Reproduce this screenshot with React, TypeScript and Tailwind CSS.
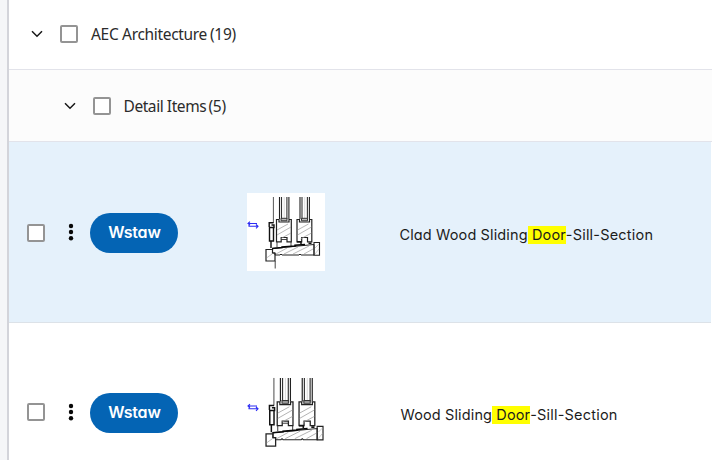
import React from "react";

function Chevron() {
  return (
    <svg width="12" height="8" viewBox="0 0 12 8" fill="none" stroke="#171717" strokeWidth="1.5">
      <path d="M1 1.2 6 6.2 11 1.2" />
    </svg>
  );
}

function Box() {
  return <span className="block h-[18px] w-[18px] shrink-0 rounded-[2px] border-2 border-[#949494] bg-white" />;
}

function Dots() {
  return (
    <svg width="6" height="18" viewBox="0 0 6 18" fill="#080808" className="shrink-0">
      <circle cx="3" cy="3" r="2.2" />
      <circle cx="3" cy="9" r="2.2" />
      <circle cx="3" cy="15.2" r="2.2" />
    </svg>
  );
}

function Glazing({ x }: { x: number }) {
  return (
    <g transform={`translate(${x} 0)`}>
      <path d="M3.5 4V26M12.9 4V26" stroke="#222" strokeWidth="1.1" />
      <path d="M5.5 4V26M10.9 4V26" stroke="#333" strokeWidth="1.1" />
      <path d="M8.2 4V25" stroke="#c4c4c4" strokeWidth=".6" />
      <path d="M.5 26.5H3V29H13V26.5H15.3V48.8H11V44.5H5.2V48.8H.5Z" fill="#fff" stroke="#222" strokeWidth="1.2" />
      <path d="M5 25.3h6v2.5H5z" fill="#bbb" stroke="#333" strokeWidth="1" />
      <path d="M1 37 12 31M1 42 15 34M4 46 15 40" stroke="#999" strokeWidth=".7" />
    </g>
  );
}

function Section({ tail }: { tail?: boolean }) {
  return (
    <g fill="none">
      <path d="M26.4 4V30" stroke="#444" strokeWidth=".9" />
      <Glazing x={29} />
      <Glazing x={49.5} />
      <path d="M30 49V54M44 49V53M34 46.5H40" stroke="#333" strokeWidth=".9" />
      <path d="M22.2 34V29.8H26.5M24.5 32H27V34.5H22.5V48H26.5V34M24 48V55" stroke="#111" strokeWidth="1.4" />
      <path d="M25.5 55.5 67 51.5V62H54L53 61L52 62H35L34 61L33 62H28V60H25.5Z" fill="#fff" stroke="#222" strokeWidth="1" />
      <path d="M29 61 40 55M37 61 51 54M46 61 62 53M57 61 66 56" stroke="#999" strokeWidth=".7" />
      <path d="M67 49.5H72.5V62.2H67Z" stroke="#222" strokeWidth="1.1" />
      <path d="M68 61 72 56M68 55 72 51" stroke="#aaa" strokeWidth=".6" />
      <path d="M19 56.5H25.5V60H28V68H19Z" stroke="#222" strokeWidth="1.2" />
      <path d="M19.5 65 25 61" stroke="#999" strokeWidth=".6" />
      <path d="M25 55.5 35 54.5V54L48 53V52.3L58 51.5" stroke="#080808" strokeWidth="1.5" />
      <path d="M50 48.8H54V51M61.5 50.2H64.5" stroke="#111" strokeWidth="1.5" />
      {tail && <path d="M28.2 68V75.5" stroke="#444" />}
    </g>
  );
}

function Arrows() {
  return (
    <path d="M1 30.5H10M3 28.7 1 30.5 3 32M2 30.5V33.3H11M9 31.5 11 33.3 9 35.3" stroke="#2c2cf4" strokeWidth="1.1" fill="none" />
  );
}

function Group({ title, count, nested }: { title: string; count: string; nested?: boolean }) {
  return (
    <div
      className={`flex shrink-0 items-center border-b border-[#e2e3ea] ${
        nested ? "h-[72px] bg-[#fcfcfc] pl-[55px]" : "h-[70px] pb-[2px] pl-[22px]"
      }`}
    >
      <Chevron />
      <span className={nested ? "ml-[16.5px]" : "ml-[17px]"}>
        <Box />
      </span>
      <div className="ml-[13px] flex gap-[3px] whitespace-nowrap font-['Noto_Sans',sans-serif] text-[15.5px] leading-6 text-[#2b2b2b]">
        <span className={nested ? "w-[82px] tracking-[-0.43px]" : "w-[116px] tracking-[-0.32px]"}>{title}</span>
        <span className="tracking-[-0.3px]">{count}</span>
      </div>
    </div>
  );
}

function Insert() {
  return (
    <button className="mt-px ml-[16px] h-10 w-[88px] shrink-0 rounded-full bg-[#0464b4] pb-[2px] font-['Inter',sans-serif] text-[16px] font-semibold tracking-[-0.2px] text-white [font-feature-settings:'cv11']">
      Wstaw
    </button>
  );
}

function Name({ before }: { before: string }) {
  return (
    <span className="flex items-center whitespace-pre font-['Inter',sans-serif] text-[14.5px] leading-[18px] text-[#1c1c1c] [font-feature-settings:'cv11']">
      <span className="tracking-[0.13px]">{before}</span>
      <mark className="bg-[#ffff00] tracking-[0.14px] text-[#1c1c1c]"> Door</mark>
      <span className="tracking-[0.2px]">-Sill-Section</span>
    </span>
  );
}

export default function App() {
  return (
    <div className="flex h-[460px] w-[712px] overflow-hidden bg-white">
      <div className="w-[9px] shrink-0 border-r-2 border-[#d3d4da] bg-[#f5f6f8]" />
      <main className="flex min-w-0 flex-1 flex-col">
        <Group title="AEC Architecture" count="(19)" />
        <Group title="Detail Items" count="(5)" nested />
        <div className="mr-px flex h-[181px] shrink-0 items-center border-b border-[#dce2e8] bg-[#e5f1fb] pl-[18.4px]">
          <div className="pt-[2px]"><Box /></div>
          <span className="ml-[23px]"><Dots /></span>
          <Insert />
          <svg className="ml-[68.6px] shrink-0 bg-white" width="78" height="78" viewBox="0 0 78 78">
            <Arrows />
            <Section tail />
          </svg>
          <div className="ml-[74.5px] pt-[5px]"><Name before="Clad Wood Sliding" /></div>
        </div>
        <div className="flex h-[181px] shrink-0 items-center pl-[18.4px]">
          <div className="pb-[4px]"><Box /></div>
          <span className="ml-[23px] pb-[4px]"><Dots /></span>
          <div className="pb-[2px]"><Insert /></div>
          <svg className="ml-[68.6px] shrink-0" width="78" height="78" viewBox="0 0 78 78">
            <g transform="translate(0 .5)"><Arrows /></g>
            <g transform="translate(-1.2 -1.3) scale(1.065)"><Section /></g>
          </svg>
          <div className="ml-[75.5px] pt-[3px]"><Name before="Wood Sliding" /></div>
        </div>
      </main>
    </div>
  );
}
